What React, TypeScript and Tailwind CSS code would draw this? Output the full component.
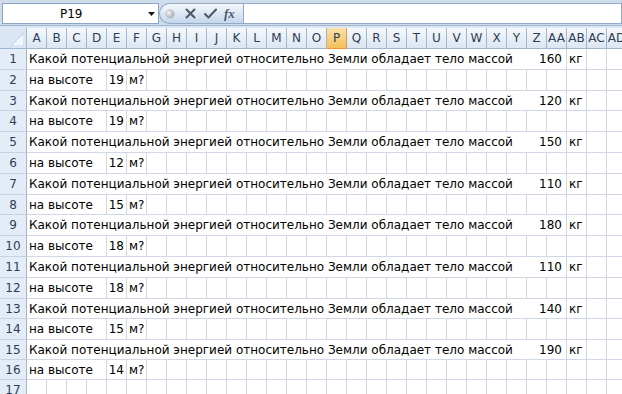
import React from "react";

const FONT = "'DejaVu Sans', Verdana, sans-serif";

const COLS = [
  "A", "B", "C", "D", "E", "F", "G", "H", "I", "J", "K", "L", "M", "N", "O",
  "P", "Q", "R", "S", "T", "U", "V", "W", "X", "Y", "Z", "AA", "AB", "AC", "AD",
];

const TASKS = [
  { mass: 160, height: 19 },
  { mass: 120, height: 19 },
  { mass: 150, height: 12 },
  { mass: 110, height: 15 },
  { mass: 180, height: 18 },
  { mass: 110, height: 18 },
  { mass: 140, height: 15 },
  { mass: 190, height: 14 },
];

const ROW_HEIGHTS = ["h-[21px]", "h-[21px]", "h-[20px]", "h-[21px]", "h-[21px]", "h-[21px]", "h-[21px]", "h-[20px]", "h-[21px]", "h-[21px]", "h-[21px]", "h-[21px]", "h-[20px]", "h-[21px]", "h-[20px]", "h-[20px]", "h-[21px]"];

const QUESTION = "Какой потенциальной энергией относительно Земли обладает тело массой";

function RowHeader({ n }: { n: number }) {
  return (
    <div className="flex w-[27px] shrink-0 items-center justify-center border-r border-b border-r-[#9eb6ce] border-b-[#c5d3e5] bg-[#e4ecf7] text-[12px] text-[#2c3e55]">
      {n}
    </div>
  );
}

function Cell({ children, className = "" }: { children?: React.ReactNode; className?: string }) {
  return (
    <div className={`flex w-[20px] shrink-0 items-center border-r border-b border-[#d0d7e5] ${className}`}>
      {children}
    </div>
  );
}

function FormulaBar() {
  return (
    <div className="flex h-[25px] items-end bg-[#cfdcec] pb-[1px]">
      <div className="ml-[2px] flex h-[21px] w-[157px] items-center border border-[#8ba5c5] bg-white">
        <span className="ml-[57px] text-[12px] text-black">P19</span>
        <svg className="ml-auto mr-[3px]" width="7" height="4" viewBox="0 0 7 4">
          <path d="M0 0h7L3.5 4z" fill="#1a1a1a" />
        </svg>
      </div>
      <div className="flex h-[21px] w-[84px] items-center rounded-l-full border border-r-0 border-[#93abc9] bg-gradient-to-b from-[#f5f8fc] to-[#c5d6eb]">
        <svg className="ml-[5px]" width="10" height="10" viewBox="0 0 10 10">
          <defs>
            <radialGradient id="dot" cx="35%" cy="35%" r="65%">
              <stop offset="0%" stopColor="#f4f4f4" />
              <stop offset="100%" stopColor="#a9b0b8" />
            </radialGradient>
          </defs>
          <circle cx="5" cy="5" r="4.2" fill="url(#dot)" stroke="#b8c0c9" strokeWidth="0.6" />
        </svg>
        <svg className="ml-[10px]" width="11" height="11" viewBox="0 0 11 11">
          <path d="M1.5 1.5l8 8M9.5 1.5l-8 8" stroke="#4c5866" strokeWidth="2" strokeLinecap="round" />
        </svg>
        <svg className="ml-[8px]" width="13" height="11" viewBox="0 0 13 11">
          <path d="M1 6l3.5 3.5L12 1.5" stroke="#4c5866" strokeWidth="2" fill="none" strokeLinecap="round" strokeLinejoin="round" />
        </svg>
        <span
          className="ml-[7px] text-[13px] font-bold italic leading-none text-[#4c5866]"
          style={{ fontFamily: "'Liberation Serif', 'DejaVu Serif', serif" }}
        >
          fx
        </span>
      </div>
      <div className="h-[21px] flex-1 border border-[#93abc9] bg-white" />
    </div>
  );
}

function ColumnHeader() {
  return (
    <div className="flex h-[21px]">
      <div className="relative w-[27px] shrink-0 border-r border-b border-[#9eb6ce] bg-[#dbe6f4]">
        <svg className="absolute right-[2px] bottom-[2px]" width="13" height="13" viewBox="0 0 13 13">
          <path d="M13 0V13H0z" fill="#f3f7fc" stroke="#b5c7de" strokeWidth="0.8" />
        </svg>
      </div>
      {COLS.map((c) =>
        c === "P" ? (
          <div
            key={c}
            className="flex w-[20px] shrink-0 items-center justify-center overflow-hidden whitespace-nowrap border-r border-b border-[#f29536] bg-gradient-to-b from-[#fbe0a8] to-[#f4c05a] text-[12px] text-[#2c3e55]"
          >
            {c}
          </div>
        ) : (
          <div
            key={c}
            className="flex w-[20px] shrink-0 items-center justify-center overflow-hidden whitespace-nowrap border-r border-b border-[#9eb6ce] bg-gradient-to-b from-[#f6f9fc] to-[#dce5f1] text-[12px] text-[#2c3e55]"
          >
            {c}
          </div>
        ),
      )}
    </div>
  );
}

export default function App() {
  const rows: React.ReactNode[] = [];
  TASKS.forEach((t, i) => {
    const n1 = i * 2 + 1;
    const n2 = i * 2 + 2;
    rows.push(
      <div key={n1} className={`flex ${ROW_HEIGHTS[n1 - 1]}`}>
        <RowHeader n={n1} />
        <div className="flex w-[540px] shrink-0 items-center justify-between whitespace-nowrap border-r border-b border-[#d0d7e5] pl-[2px] pr-[4px]">
          <span>{QUESTION}</span>
          <span>{t.mass}</span>
        </div>
        <Cell className="pl-[2px]">кг</Cell>
        <Cell />
        <Cell />
      </div>,
    );
    rows.push(
      <div key={n2} className={`flex ${ROW_HEIGHTS[n2 - 1]}`}>
        <RowHeader n={n2} />
        <div className="flex w-[80px] shrink-0 items-center whitespace-nowrap border-r border-b border-[#d0d7e5] pl-[2px]">
          на высоте
        </div>
        <Cell className="justify-end pr-[2px]">{t.height}</Cell>
        <Cell className="whitespace-nowrap pl-[2px]">м?</Cell>
        {COLS.slice(6).map((c) => (
          <Cell key={c} />
        ))}
      </div>,
    );
  });

  return (
    <div
      className="h-[394px] w-[622px] overflow-hidden bg-white text-[12px] text-black"
      style={{ fontFamily: FONT }}
    >
      <FormulaBar />
      <div className="h-[3px] border-t border-[#9eb6ce] bg-[#dde7f3]" />
      <ColumnHeader />
      {rows}
      <div className={`flex ${ROW_HEIGHTS[16]}`}>
        <RowHeader n={17} />
        {COLS.map((c) => (
          <Cell key={c} />
        ))}
      </div>
    </div>
  );
}
